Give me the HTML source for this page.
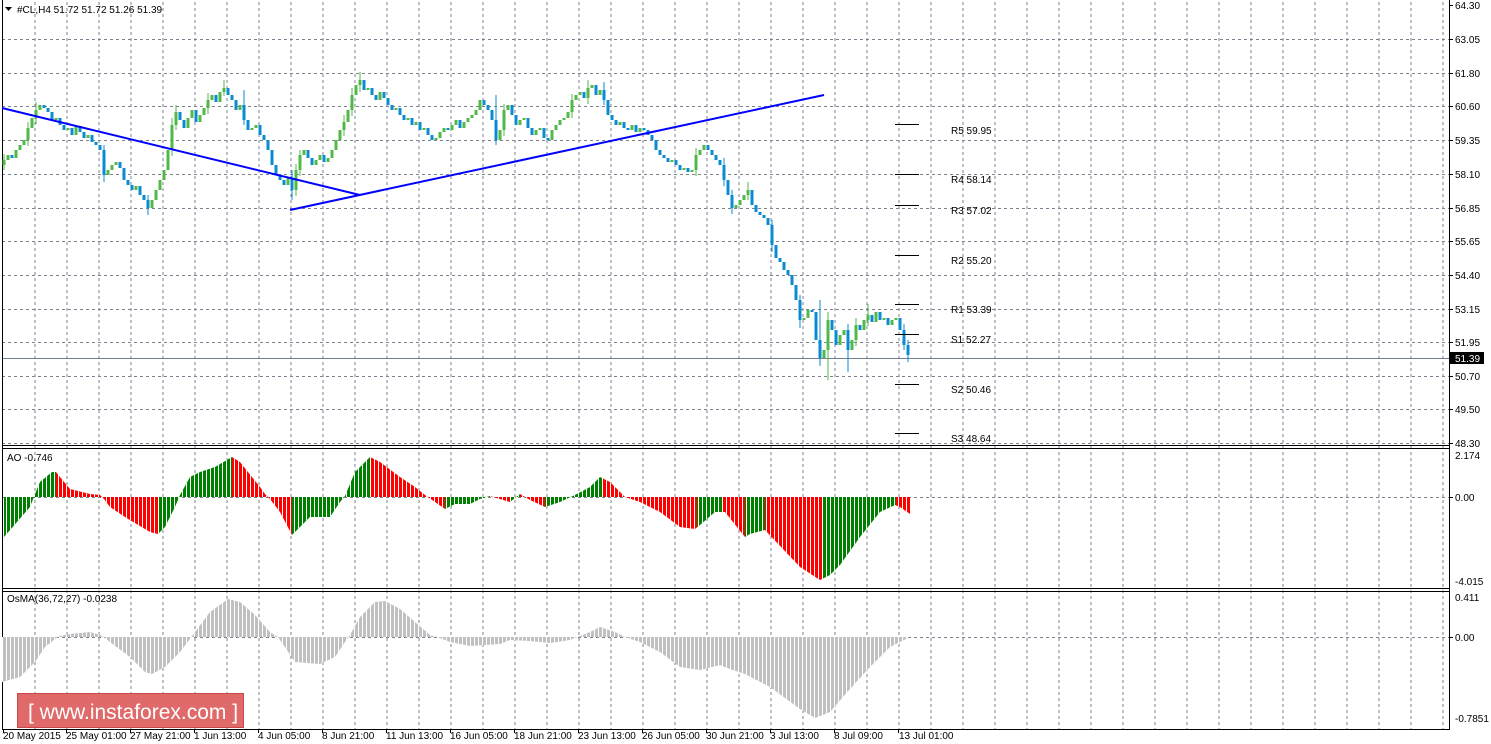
<!DOCTYPE html>
<html><head><meta charset="utf-8"><style>
html,body{margin:0;padding:0;background:#fff;width:1491px;height:744px;overflow:hidden}
svg{display:block}
text{font-family:"Liberation Sans",sans-serif;font-size:10px;fill:#000}
</style></head><body>
<svg width="1491" height="744" viewBox="0 0 1491 744" xmlns="http://www.w3.org/2000/svg">
<defs>
<pattern id="st" patternUnits="userSpaceOnUse" width="4" height="10"><rect x="2" y="0" width="1" height="10" fill="#fff" shape-rendering="crispEdges"/></pattern>
<clipPath id="aoc"><path d="M4,497 L4,537 L30,507 L35,494 L40,482 L52,472 L56,472 L60,477 L70,489 L90,494 L100,495 L104,499 L110,507 L125,517 L150,532 L158,534 L165,527 L175,507 L180,495 L190,477 L200,472 L215,467 L232,457 L240,462 L260,487 L265,494 L270,499 L280,512 L292,535 L300,527 L310,517 L330,517 L340,502 L345,496 L355,472 L370,457 L380,462 L400,477 L415,487 L425,495 L435,502 L445,509 L455,504 L470,504 L480,499 L490,496 L500,499 L510,502 L520,494 L530,500 L545,507 L560,502 L575,495 L590,487 L600,477 L610,482 L625,497 L640,502 L660,512 L680,527 L695,529 L700,525 L715,512 L725,512 L745,537 L750,534 L765,530 L800,567 L820,580 L830,575 L840,565 L860,537 L880,512 L895,505 L900,507 L910,514 L910,497 Z"/></clipPath>
<clipPath id="osc"><path d="M2,637 L2,682 L20,677 L35,662 L45,647 L55,639 L60,636 L70,634 L90,632 L100,635 L104,637 L110,642 L130,657 L145,672 L152,674 L165,667 L180,652 L190,639 L195,632 L210,612 L228,599 L240,602 L255,615 L270,632 L278,637 L285,647 L295,662 L320,664 L335,657 L345,642 L350,635 L360,617 L375,602 L385,601 L400,609 L415,622 L430,635 L440,638 L450,642 L470,646 L500,644 L510,640 L530,641 L550,643 L570,640 L590,632 L600,627 L615,632 L625,637 L640,642 L660,652 L680,667 L700,670 L720,665 L730,669 L745,674 L770,687 L800,709 L815,718 L830,712 L850,689 L870,667 L890,647 L906,639 L906,637 Z"/></clipPath>
</defs>
<g stroke="#7a8290" stroke-width="1" stroke-dasharray="3,3" fill="none">
<path d="M35 2V729M67 2V729M99 2V729M131 2V729M163 2V729M195 2V729M227 2V729M259 2V729M291 2V729M323 2V729M355 2V729M387 2V729M419 2V729M451 2V729M483 2V729M515 2V729M547 2V729M579 2V729M611 2V729M643 2V729M675 2V729M707 2V729M739 2V729M771 2V729M803 2V729M835 2V729M867 2V729M899 2V729M931 2V729M963 2V729M995 2V729M1027 2V729M1059 2V729M1091 2V729M1123 2V729M1155 2V729M1187 2V729M1219 2V729M1251 2V729M1283 2V729M1315 2V729M1347 2V729M1379 2V729M1411 2V729M1443 2V729"/>
<path d="M2 39.5H1449M2 73.5H1449M2 106.5H1449M2 140.5H1449M2 174.5H1449M2 208.5H1449M2 241.5H1449M2 275.5H1449M2 309.5H1449M2 342.5H1449M2 376.5H1449M2 409.5H1449M2 443.5H1449M2 497.5H1449M2 637.5H1449"/>
</g>
<line x1="2" y1="358.5" x2="1449" y2="358.5" stroke="#708090" stroke-width="1"/>
<g stroke="#000" stroke-width="1" fill="none">
<path d="M2.5 0V729.5H1449.5V0"/>
<path d="M2 445.5H1449M2 448.5H1449M2 588.5H1449M2 591.5H1449"/>
</g>
<g stroke="#000"><path d="M1449 5.5h4M1449 39.5h4M1449 73.5h4M1449 106.5h4M1449 140.5h4M1449 174.5h4M1449 208.5h4M1449 241.5h4M1449 275.5h4M1449 309.5h4M1449 342.5h4M1449 376.5h4M1449 409.5h4M1449 443.5h4M1449 497.5h4M1449 637.5h4"/>
<path d="M3.5 729v4M66.5 729v4M130.5 729v4M194.5 729v4M258.5 729v4M322.5 729v4M386.5 729v4M450.5 729v4M514.5 729v4M578.5 729v4M642.5 729v4M706.5 729v4M770.5 729v4M834.5 729v4M898.5 729v4"/></g>
<path fill="none" stroke="#52b848" stroke-width="3" d="M4 160V165M8 155V160M16 150V158M20 145V150M24 140V145M28 128V140M32 118V128M36 110V118M40 105V110M56 118V120M68 128V130M76 126V135M88 135V138M108 170V175M112 165V170M116 162V165M136 186V190M152 200V208M156 190V200M160 180V190M164 170V180M168 150V170M172 125V150M176 112V125M188 118V128M192 110V118M200 115V122M204 108V115M208 100V108M212 95V100M220 92V102M224 88V92M240 105V110M252 128V130M256 125V128M288 178V185M296 170V190M300 155V170M304 150V155M316 160V165M320 155V160M328 158V162M332 150V158M336 140V150M340 130V140M344 122V130M348 110V122M352 95V110M356 85V95M360 80V85M368 88V90M380 92V100M396 108V110M408 118V120M416 122V125M424 128V130M436 138V140M440 132V138M444 128V132M452 125V130M456 120V125M464 122V128M468 118V122M472 115V118M476 110V115M480 100V110M500 130V140M504 110V130M508 105V110M520 120V125M524 118V120M536 130V135M540 128V130M552 130V140M556 125V130M560 120V125M564 118V120M568 112V118M572 100V112M576 95V100M580 92V95M588 88V98M592 85V88M600 90V95M620 122V125M632 125V130M640 128V132M672 160V162M684 168V170M692 170V172M696 155V170M700 150V155M704 145V150M736 205V208M740 200V205M744 195V200M748 190V195M804 318V320M808 310V318M824 350V358M828 320V350M840 335V345M844 330V335M852 340V350M856 325V340M864 320V330M868 315V320M876 312V322M884 318V320M892 320V325M896 318V320"/>
<path fill="none" stroke="#52b848" stroke-width="1" d="M4 154V170M28 122V146M36 102V124M172 118V156M176 105V130M208 93V114M224 80V96M296 164V196M300 150V176M344 115V136M352 88V116M360 72V92M504 104V136M572 94V118M588 80V104M696 148V176M748 182V200M828 312V380M856 318V346M868 304V326"/>
<path fill="none" stroke="#0b8bd0" stroke-width="3" d="M12 155V158M44 105V108M48 108V112M52 112V120M60 118V125M64 125V130M72 128V135M80 126V132M84 132V138M92 135V142M96 142V145M100 145V150M104 150V175M120 162V168M124 168V180M128 180V185M132 185V190M140 186V195M144 195V200M148 200V208M180 112V120M184 120V128M196 110V122M216 95V102M228 88V95M232 95V100M236 100V110M244 105V120M248 120V130M260 125V135M264 135V140M268 140V150M272 150V165M276 165V175M280 175V180M284 180V185M292 178V190M308 150V158M312 158V165M324 155V162M364 80V90M372 88V95M376 95V100M384 92V98M388 98V105M392 105V110M400 108V115M404 115V120M412 118V125M420 122V130M428 128V135M432 135V140M448 128V130M460 120V128M484 100V105M488 105V110M492 110V120M496 120V140M512 105V115M516 115V125M528 118V128M532 128V135M544 128V138M548 138V140M584 92V98M596 85V95M604 90V100M608 100V115M612 115V120M616 120V125M624 122V128M628 128V130M636 125V132M644 128V130M648 130V135M652 135V140M656 140V150M660 150V155M664 155V158M668 158V162M676 160V165M680 165V170M688 168V172M708 145V150M712 150V155M716 155V160M720 160V165M724 165V180M728 180V195M732 195V208M752 190V205M756 205V212M760 212V215M764 215V218M768 218V225M772 225V245M776 245V258M780 258V262M784 262V270M788 270V275M792 275V285M796 285V300M800 300V320M812 310V312M816 312V340M820 340V358M832 320V330M836 330V345M848 330V350M860 325V330M872 315V322M880 312V320M888 318V325M900 318V330M904 330V345M908 345V355"/>
<path fill="none" stroke="#0b8bd0" stroke-width="1" d="M104 145V182M148 195V215M244 90V125M292 170V200M496 95V145M604 82V105M724 158V186M732 190V214M772 220V252M800 295V328M820 300V366M848 324V372M904 324V350M908 340V362"/>
<g stroke="#0000ff" stroke-width="2" fill="none"><path d="M2 108L360 195"/><path d="M290 210L824 95"/></g>
<g stroke="#000" stroke-width="1"><path d="M895 124.5h24M895 174.5h24M895 205.5h24M895 255.5h24M895 304.5h24M895 334.5h24M895 384.5h24M895 433.5h24"/></g>
<g>
<text x="951" y="134">R5 59.95</text><text x="951" y="183">R4 58.14</text><text x="951" y="214">R3 57.02</text><text x="951" y="264">R2 55.20</text><text x="951" y="313">R1 53.39</text><text x="951" y="343">S1 52.27</text><text x="951" y="393">S2 50.46</text><text x="951" y="442">S3 48.64</text>
</g>
<g clip-path="url(#aoc)">
<rect x="2" y="440" width="54" height="150" fill="#008000"/>
<rect x="56" y="440" width="102" height="150" fill="#ff0000"/>
<rect x="158" y="440" width="74" height="150" fill="#008000"/>
<rect x="232" y="440" width="60" height="150" fill="#ff0000"/>
<rect x="292" y="440" width="78" height="150" fill="#008000"/>
<rect x="370" y="440" width="75" height="150" fill="#ff0000"/>
<rect x="445" y="440" width="45" height="150" fill="#008000"/>
<rect x="490" y="440" width="20" height="150" fill="#ff0000"/>
<rect x="510" y="440" width="10" height="150" fill="#008000"/>
<rect x="520" y="440" width="25" height="150" fill="#ff0000"/>
<rect x="545" y="440" width="57" height="150" fill="#008000"/>
<rect x="602" y="440" width="95" height="150" fill="#ff0000"/>
<rect x="697" y="440" width="25" height="150" fill="#008000"/>
<rect x="722" y="440" width="23" height="150" fill="#ff0000"/>
<rect x="745" y="440" width="20" height="150" fill="#008000"/>
<rect x="765" y="440" width="57" height="150" fill="#ff0000"/>
<rect x="822" y="440" width="74" height="150" fill="#008000"/>
<rect x="896" y="440" width="14" height="150" fill="#ff0000"/>
<rect x="2" y="440" width="910" height="150" fill="url(#st)"/>
</g>
<g clip-path="url(#osc)">
<rect x="2" y="590" width="910" height="140" fill="#c0c0c0"/>
<rect x="2" y="590" width="910" height="140" fill="url(#st)"/>
</g>
<path d="M5 7h7l-3.5 4z" fill="#000"/>
<text x="17" y="13">#CL,H4  51.72 51.72 51.26 51.39</text>
<text x="7" y="461">AO -0.746</text>
<text x="7" y="602">OsMA(36,72,27) -0.0238</text>
<g>
<text x="1455" y="9">64.30</text><text x="1455" y="43">63.05</text><text x="1455" y="77">61.80</text><text x="1455" y="110">60.60</text><text x="1455" y="144">59.35</text><text x="1455" y="178">58.10</text><text x="1455" y="212">56.85</text><text x="1455" y="245">55.65</text><text x="1455" y="279">54.40</text><text x="1455" y="313">53.15</text><text x="1455" y="346">51.95</text><text x="1455" y="380">50.70</text><text x="1455" y="413">49.50</text><text x="1455" y="447">48.30</text>
<rect x="1450" y="352" width="34" height="12" fill="#000"/><text x="1455" y="362" style="fill:#fff">51.39</text>
<text x="1455" y="459">2.174</text><text x="1455" y="501">0.00</text><text x="1455" y="585">-4.015</text>
<text x="1455" y="601">0.411</text><text x="1455" y="641">0.00</text><text x="1455" y="722">-0.7851</text>
</g>
<g>
<text x="3" y="739">20 May 2015</text><text x="66" y="739">25 May 01:00</text><text x="130" y="739">27 May 21:00</text><text x="194" y="739">1 Jun 13:00</text><text x="258" y="739">4 Jun 05:00</text><text x="322" y="739">8 Jun 21:00</text><text x="386" y="739">11 Jun 13:00</text><text x="450" y="739">16 Jun 05:00</text><text x="514" y="739">18 Jun 21:00</text><text x="578" y="739">23 Jun 13:00</text><text x="642" y="739">26 Jun 05:00</text><text x="706" y="739">30 Jun 21:00</text><text x="770" y="739">3 Jul 13:00</text><text x="834" y="739">8 Jul 09:00</text><text x="899" y="739">13 Jul 01:00</text>
</g>
<rect x="17.5" y="693.5" width="226" height="34" fill="#e06a6a" stroke="#c84848" stroke-width="1"/>
<text x="28" y="719" style="font-size:21px;fill:#fff">[  www.instaforex.com ]</text>
</svg>
</body></html>
